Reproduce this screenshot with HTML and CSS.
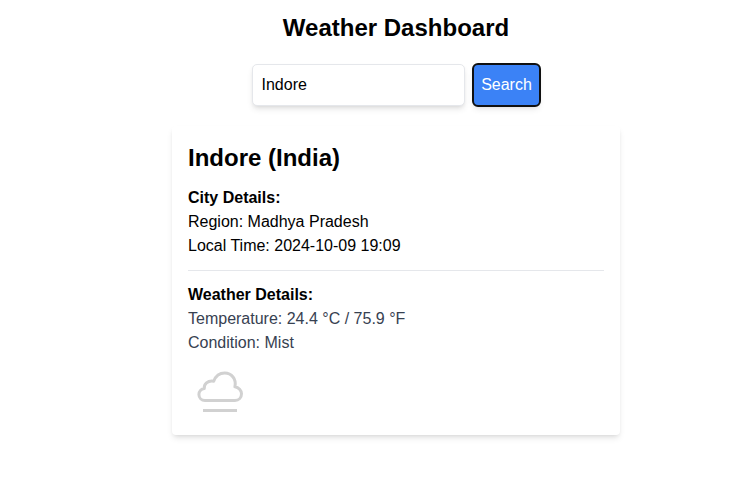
FILE: index.html
```html
<!DOCTYPE html>
<html lang="en">
<head>
<meta charset="utf-8">
<title>Weather Dashboard</title>
<link rel="stylesheet" href="styles.css">
</head>
<body>
<main class="dashboard">
  <h1 class="title">Weather Dashboard</h1>
  <form class="search">
    <input class="search-input" type="text" value="Indore">
    <button class="search-button" type="button">Search</button>
  </form>
  <section class="card">
    <h2 class="city">Indore (India)</h2>
    <div class="details place">
      <h3 class="label">City Details:</h3>
      <p>Region: Madhya Pradesh</p>
      <p>Local Time: 2024-10-09 19:09</p>
    </div>
    <div class="details weather">
      <h3 class="label">Weather Details:</h3>
      <p>Temperature: 24.4 °C / 75.9 °F</p>
      <p>Condition: Mist</p>
      <svg class="icon" width="64" height="64" viewBox="0 0 64 64" fill="none" stroke="#d1d1d1" stroke-width="3" stroke-linejoin="round">
        <path d="M17 46.500C13.500 46.500 10.900 43.800 10.900 40.500C10.900 37.500 13.200 35 16.300 34.500C15.800 30.500 19.500 26.200 25.700 27.200C27.500 22.500 31.500 19 36.700 19C43.500 19 48.700 25 46.900 32.800C50.700 33.400 53.500 36.500 53.500 39.800C53.500 43.600 50.800 46.500 47 46.500Z" transform="translate(0 -1)"/>
        <path d="M15 55.500h34"/>
      </svg>
    </div>
  </section>
</main>
</body>
</html>
```
FILE: styles.css
```css
* { box-sizing: border-box; }
body { margin: 0; min-height: 491px; background: #fff; color: #000; font: 16px/24px "Liberation Sans", Arial, sans-serif; }
h1, h2, h3, p { margin: 0; }
.dashboard { width: 448px; min-height: 491px; margin-left: 172px; padding-top: 12px; }
.title { font-size: 24px; line-height: 32px; text-align: center; }
.search { display: flex; justify-content: center; gap: 8px; margin: 20px 0; }
.search-input { width: 213px; height: 42px; padding: 8px 8px 8px 8.5px; border: 1px solid #e5e7eb; border-radius: 5px; font: inherit; color: #000; background: #fff; box-shadow: 0 4px 6px -1px rgba(0,0,0,.1), 0 2px 4px -2px rgba(0,0,0,.1); outline: none; }
.search-button { width: 67px; height: 42px; padding: 8px 0; border: 0; border-radius: 5px; font: inherit; color: #fff; background: #3b82f6; outline: 2px solid #101010; outline-offset: -1px; box-shadow: 0 4px 6px -1px rgba(0,0,0,.1), 0 2px 4px -2px rgba(0,0,0,.1); }
.card { height: 309px; padding: 16px; border-radius: 4px; background: #fff; box-shadow: 0 4px 6px -1px rgba(0,0,0,.1), 0 2px 4px -2px rgba(0,0,0,.1); }
.city { font-size: 24px; line-height: 32px; margin-bottom: 12px; }
.label { font-size: 16px; line-height: 24px; color: #000; }
.place { padding-bottom: 12px; border-bottom: 1px solid #e5e7eb; }
.weather { padding-top: 12px; color: #374151; }
.icon { display: block; }
```
